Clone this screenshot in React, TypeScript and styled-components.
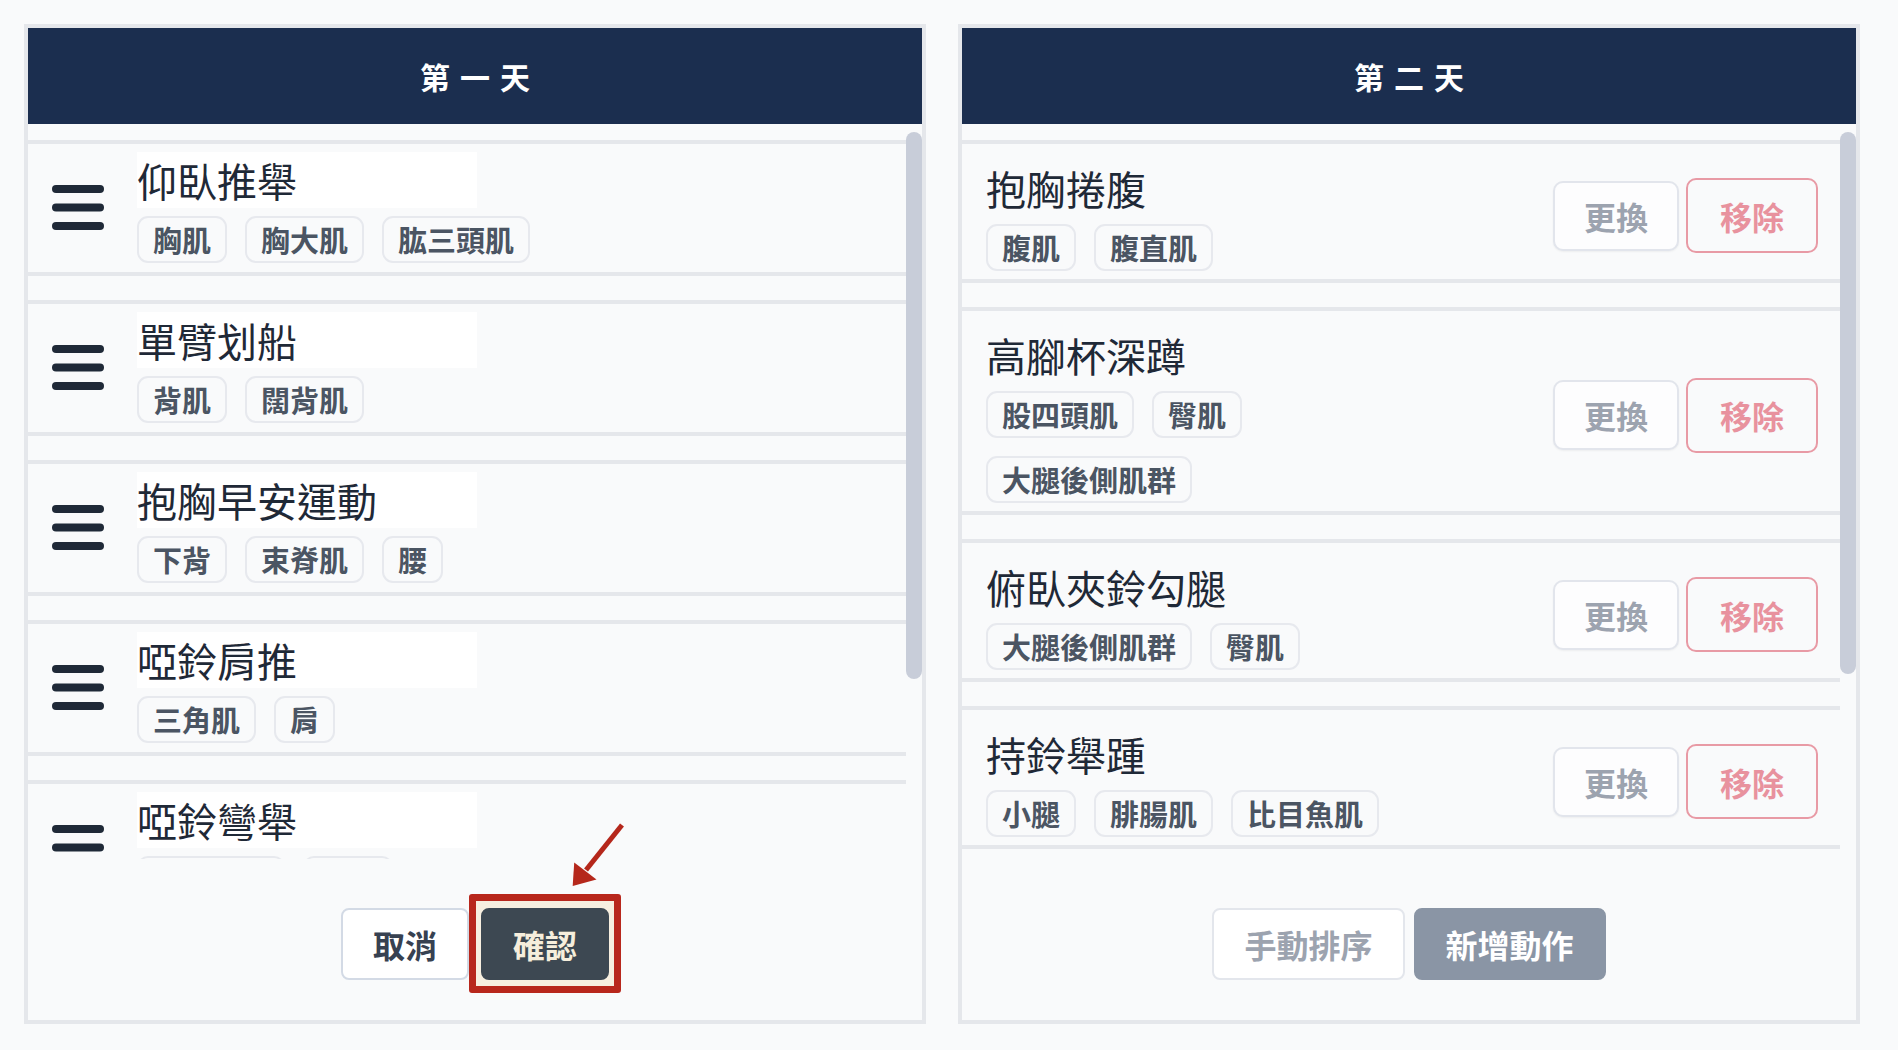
import React from "react";
import styled, { createGlobalStyle } from "styled-components";

const GlobalStyle = createGlobalStyle`
  body {
    margin: 0;
    background: #f9fafb;
    font-family: "Noto Sans CJK TC", "Noto Sans", sans-serif;
  }
`;

const Page = styled.div`
  display: grid;
  grid-template-columns: 1fr 1fr;
  gap: 32px;
  padding: 24px 38px 24px 24px;
`;

const Panel = styled.section`
  display: flex;
  flex-direction: column;
  height: 1000px;
  box-sizing: border-box;
  border: 4px solid #e5e7eb;
  background: #f9fafb;
`;

const PanelHeader = styled.header`
  height: 96px;
  flex-shrink: 0;
  display: flex;
  align-items: center;
  justify-content: center;
  background: #1b2e4f;
  color: #ffffff;
  font-size: 30px;
  font-weight: 700;
  letter-spacing: 10px;
  padding-left: 10px;
`;

const ListArea = styled.div`
  height: 735px;
  flex-shrink: 0;
  display: flex;
`;

const Viewport = styled.div`
  flex: 1;
  overflow: hidden;
  padding-top: 16px;
`;

const ScrollTrack = styled.div`
  width: 16px;
  flex-shrink: 0;
  padding-top: 8px;
`;

const ScrollThumb = styled.div`
  width: 16px;
  border-radius: 8px;
  background: #c8cdd9;
`;

const Row = styled.div<{ $sortable?: boolean }>`
  display: flex;
  align-items: center;
  justify-content: ${(p) => (p.$sortable ? "flex-start" : "space-between")};
  gap: 33px;
  border-top: 4px solid #e5e7eb;
  border-bottom: 4px solid #e5e7eb;
  margin-bottom: 24px;
  padding: ${(p) => (p.$sortable ? "8px 24px 9px" : "16px 22px 8px 24px")};
`;

const Info = styled.div`
  display: flex;
  flex-direction: column;
  gap: 8px;
  max-width: 460px;
`;

const Name = styled.div<{ $boxed?: boolean }>`
  height: 56px;
  width: ${(p) => (p.$boxed ? "340px" : "auto")};
  background: ${(p) => (p.$boxed ? "#ffffff" : "transparent")};
  font-size: 40px;
  line-height: 56px;
  color: #1f2937;
  white-space: nowrap;
`;

const Tags = styled.div`
  display: flex;
  flex-wrap: wrap;
  gap: 18px;
`;

const Tag = styled.span`
  height: 47px;
  box-sizing: border-box;
  padding: 0 14px;
  border: 2px solid #e7e9ee;
  border-radius: 11px;
  font-size: 29px;
  line-height: 43px;
  font-weight: 600;
  color: #4b5563;
  white-space: nowrap;
`;

const Actions = styled.div`
  display: flex;
  align-items: center;
  gap: 7px;
`;

const ActionButton = styled.button<{ $danger?: boolean }>`
  box-sizing: border-box;
  height: ${(p) => (p.$danger ? "75px" : "70px")};
  padding: 0 ${(p) => (p.$danger ? "32px" : "29px")};
  border-radius: 10px;
  border: 2px solid ${(p) => (p.$danger ? "#e89aa5" : "#e2e5ec")};
  background: ${(p) => (p.$danger ? "transparent" : "#fdfdfe")};
  box-shadow: ${(p) => (p.$danger ? "none" : "0 1px 2px rgba(0,0,0,0.05)")};
  color: ${(p) => (p.$danger ? "#e8929e" : "#9ca3af")};
  font-family: inherit;
  font-size: 32px;
  font-weight: 600;
  white-space: nowrap;
`;

const Footer = styled.div`
  flex: 1;
  display: flex;
  justify-content: center;
  align-items: flex-start;
  padding-top: 49px;
  gap: ${(p: { $gap: number }) => p.$gap}px;
`;

const FooterButton = styled.button<{ $variant: "ghost" | "muted" | "dark" | "plain" }>`
  position: relative;
  z-index: 1;
  box-sizing: border-box;
  height: 72px;
  padding: 0 30px;
  border-radius: 8px;
  font-family: inherit;
  font-size: 32px;
  font-weight: 700;
  white-space: nowrap;
  border: 2px solid
    ${(p) =>
      p.$variant === "plain"
        ? "#d3dae5"
        : p.$variant === "ghost"
        ? "#e3e6ec"
        : p.$variant === "dark"
        ? "#3d4852"
        : "#8a95a5"};
  background: ${(p) =>
    p.$variant === "dark" ? "#3d4852" : p.$variant === "muted" ? "#8a95a5" : "#ffffff"};
  color: ${(p) =>
    p.$variant === "plain"
      ? "#374151"
      : p.$variant === "ghost"
      ? "#9ca3af"
      : p.$variant === "dark"
      ? "#f6eedc"
      : "#ffffff"};
`;

const Highlight = styled.span`
  position: relative;
  display: inline-flex;
`;

const HighlightFrame = styled.span`
  position: absolute;
  left: -12px;
  right: -12px;
  top: -14px;
  bottom: -13px;
  border: 7px solid #b8271c;
  border-radius: 3px;
  background: #f7efe0;
`;

const Arrow = styled.svg`
  position: absolute;
  left: 80px;
  top: -90px;
  width: 70px;
  height: 75px;
`;

const HandleIcon = () => (
  <svg width="52" height="46" viewBox="0 0 52 46" style={{ flexShrink: 0 }}>
    <rect x="0" y="0" width="52" height="8" rx="4" fill="#1f2937" />
    <rect x="0" y="18.5" width="52" height="8" rx="4" fill="#1f2937" />
    <rect x="0" y="37" width="52" height="8" rx="4" fill="#1f2937" />
  </svg>
);

type Exercise = { name: string; tags: string[] };

const dayOne: Exercise[] = [
  { name: "仰臥推舉", tags: ["胸肌", "胸大肌", "肱三頭肌"] },
  { name: "單臂划船", tags: ["背肌", "闊背肌"] },
  { name: "抱胸早安運動", tags: ["下背", "束脊肌", "腰"] },
  { name: "啞鈴肩推", tags: ["三角肌", "肩"] },
  { name: "啞鈴彎舉", tags: ["肱二頭肌", "前臂"] },
];

const dayTwo: Exercise[] = [
  { name: "抱胸捲腹", tags: ["腹肌", "腹直肌"] },
  { name: "高腳杯深蹲", tags: ["股四頭肌", "臀肌", "大腿後側肌群"] },
  { name: "俯臥夾鈴勾腿", tags: ["大腿後側肌群", "臀肌"] },
  { name: "持鈴舉踵", tags: ["小腿", "腓腸肌", "比目魚肌"] },
];

const App: React.FC = () => (
  <>
    <GlobalStyle />
    <Page>
      <Panel>
        <PanelHeader>第一天</PanelHeader>
        <ListArea>
          <Viewport>
            {dayOne.map((ex) => (
              <Row key={ex.name} $sortable>
                <HandleIcon />
                <Info>
                  <Name $boxed>{ex.name}</Name>
                  <Tags>
                    {ex.tags.map((t) => (
                      <Tag key={t}>{t}</Tag>
                    ))}
                  </Tags>
                </Info>
              </Row>
            ))}
          </Viewport>
          <ScrollTrack>
            <ScrollThumb style={{ height: 547 }} />
          </ScrollTrack>
        </ListArea>
        <Footer $gap={12}>
          <FooterButton $variant="plain">取消</FooterButton>
          <Highlight>
            <HighlightFrame />
            <FooterButton $variant="dark">確認</FooterButton>
            <Arrow viewBox="0 0 70 75">
              <line x1="61" y1="7" x2="25" y2="52" stroke="#b5271b" strokeWidth="5" />
              <polygon points="11.7,68 13.2,44.5 35.5,61.5" fill="#b5271b" />
            </Arrow>
          </Highlight>
        </Footer>
      </Panel>

      <Panel>
        <PanelHeader>第二天</PanelHeader>
        <ListArea>
          <Viewport>
            {dayTwo.map((ex) => (
              <Row key={ex.name}>
                <Info>
                  <Name>{ex.name}</Name>
                  <Tags>
                    {ex.tags.map((t) => (
                      <Tag key={t}>{t}</Tag>
                    ))}
                  </Tags>
                </Info>
                <Actions>
                  <ActionButton>更換</ActionButton>
                  <ActionButton $danger>移除</ActionButton>
                </Actions>
              </Row>
            ))}
          </Viewport>
          <ScrollTrack>
            <ScrollThumb style={{ height: 542 }} />
          </ScrollTrack>
        </ListArea>
        <Footer $gap={9}>
          <FooterButton $variant="ghost">手動排序</FooterButton>
          <FooterButton $variant="muted">新增動作</FooterButton>
        </Footer>
      </Panel>
    </Page>
  </>
);

export default App;
